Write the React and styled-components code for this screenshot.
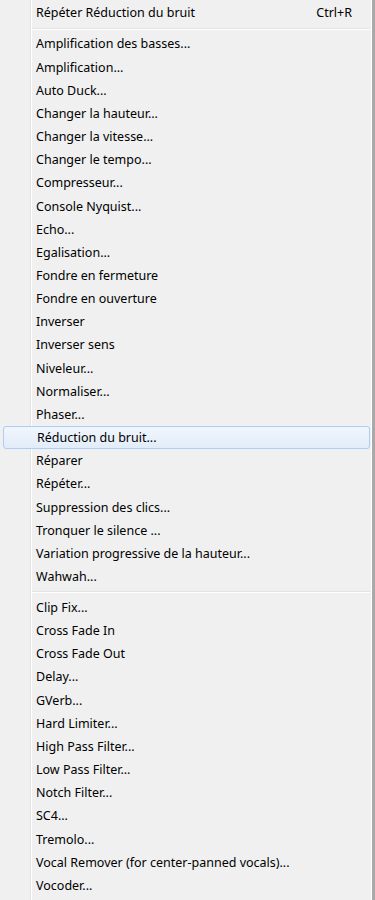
import styled, { createGlobalStyle } from "styled-components";

const GlobalStyle = createGlobalStyle`
  body {
    margin: 0;
    background: #f0f0f0;
  }
`;

const Menu = styled.div`
  width: 375px;
  height: 900px;
  overflow: hidden;
  box-sizing: border-box;
  padding-top: 1.4px;
  border-right: 3px solid #a9a9a9;
  box-shadow: inset -1px 0 0 #ffffff;
  font-family: "Noto Sans", "Open Sans", sans-serif;
  font-size: 12.5px;
  color: #000;
  background: linear-gradient(
    to right,
    #f0f0f0 30px,
    #e2e3e3 30px,
    #e2e3e3 31px,
    #ffffff 31px,
    #ffffff 32px,
    #f0f0f0 32px
  );
`;

const Item = styled.div`
  height: 23.17px;
  box-sizing: border-box;
  display: flex;
  align-items: center;
  justify-content: space-between;
  padding: 0 20px 0 36px;
  white-space: nowrap;
  ${(p) =>
    p.$active &&
    `
    margin: 0 2px 0 3px;
    padding: 0 18px 0 33px;
    border: 1px solid #aecdf2;
    border-radius: 3px;
    background: linear-gradient(#f1f6fd, #e2ecf9);
  `}
`;

const Shortcut = styled.span`
  color: #000;
`;

const Separator = styled.div`
  height: 7.8px;
  display: flex;
  align-items: center;
  padding: 0 2px 0 32px;
  &::after {
    content: "";
    flex: 1;
    height: 1px;
    background: #e2e3e3;
    box-shadow: 0 1px 0 #ffffff;
  }
`;

const effects = [
  "Amplification des basses...",
  "Amplification...",
  "Auto Duck...",
  "Changer la hauteur...",
  "Changer la vitesse...",
  "Changer le tempo...",
  "Compresseur...",
  "Console Nyquist...",
  "Echo...",
  "Egalisation...",
  "Fondre en fermeture",
  "Fondre en ouverture",
  "Inverser",
  "Inverser sens",
  "Niveleur...",
  "Normaliser...",
  "Phaser...",
  "Réduction du bruit...",
  "Réparer",
  "Répéter...",
  "Suppression des clics...",
  "Tronquer le silence ...",
  "Variation progressive de la hauteur...",
  "Wahwah...",
];

const plugins = [
  "Clip Fix...",
  "Cross Fade In",
  "Cross Fade Out",
  "Delay...",
  "GVerb...",
  "Hard Limiter...",
  "High Pass Filter...",
  "Low Pass Filter...",
  "Notch Filter...",
  "SC4...",
  "Tremolo...",
  "Vocal Remover (for center-panned vocals)...",
  "Vocoder...",
];

export default function App() {
  return (
    <>
      <GlobalStyle />
      <Menu>
        <Item>
          <span>Répéter Réduction du bruit</span>
          <Shortcut>Ctrl+R</Shortcut>
        </Item>
        <Separator />
        {effects.map((label) => (
          <Item key={label} $active={label === "Réduction du bruit..."}>
            <span>{label}</span>
          </Item>
        ))}
        <Separator />
        {plugins.map((label) => (
          <Item key={label}>
            <span>{label}</span>
          </Item>
        ))}
      </Menu>
    </>
  );
}
